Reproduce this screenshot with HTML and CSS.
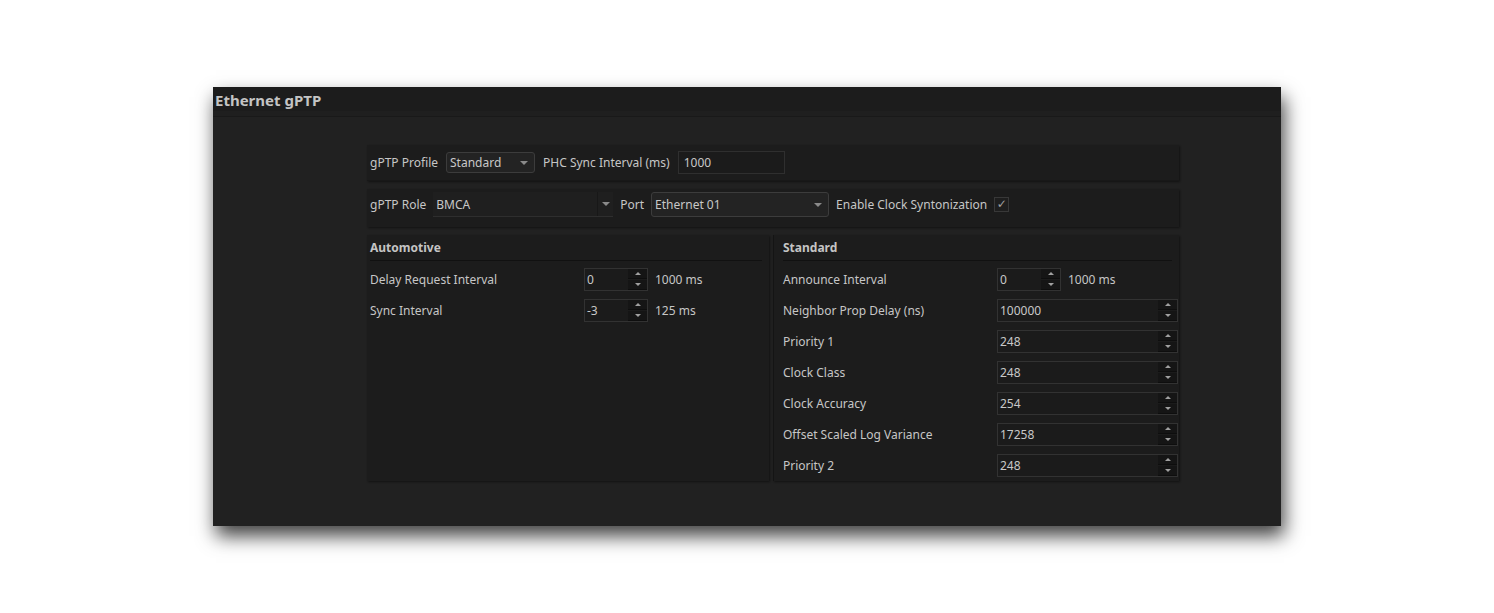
FILE: index.html
```html
<!DOCTYPE html>
<html lang="en">
<head>
  <meta charset="UTF-8">
  <title>Ethernet gPTP</title>
  <link rel="stylesheet" href="styles.css">
</head>
<body>
  <div class="window">
    <div class="titlebar">Ethernet gPTP</div>
    <div class="content">
      <!-- profile row -->
      <div class="frame row-one">
        <span class="lbl">gPTP Profile</span>
        <div class="combo combo-profile"><span>Standard</span><i class="caret"></i></div>
        <span class="lbl">PHC Sync Interval (ms)</span>
        <div class="edit edit-phc">1000</div>
      </div>

      <!-- role row -->
      <div class="frame row-two">
        <span class="lbl">gPTP Role</span>
        <div class="combo combo-flat combo-role"><span>BMCA</span><i class="caret"></i></div>
        <span class="lbl">Port</span>
        <div class="combo combo-port"><span>Ethernet 01</span><i class="caret"></i></div>
        <span class="lbl">Enable Clock Syntonization</span>
        <div class="check">&#10003;</div>
      </div>

      <div class="groups">
        <div class="frame group group-auto">
          <div class="group-title">Automotive</div>
          <div class="field">
            <span class="flabel">Delay Request Interval</span>
            <div class="spin spin-short"><span class="val">0</span><div class="arrows"><b class="up"></b><b class="down"></b></div></div>
            <span class="unit">1000 ms</span>
          </div>
          <div class="field">
            <span class="flabel">Sync Interval</span>
            <div class="spin spin-short"><span class="val">-3</span><div class="arrows"><b class="up"></b><b class="down"></b></div></div>
            <span class="unit">125 ms</span>
          </div>
        </div>

        <div class="frame group group-std">
          <div class="group-title">Standard</div>
          <div class="field">
            <span class="flabel">Announce Interval</span>
            <div class="spin spin-short"><span class="val">0</span><div class="arrows"><b class="up"></b><b class="down"></b></div></div>
            <span class="unit">1000 ms</span>
          </div>
          <div class="field">
            <span class="flabel">Neighbor Prop Delay (ns)</span>
            <div class="spin spin-wide"><span class="val">100000</span><div class="arrows"><b class="up"></b><b class="down"></b></div></div>
          </div>
          <div class="field">
            <span class="flabel">Priority 1</span>
            <div class="spin spin-wide"><span class="val">248</span><div class="arrows"><b class="up"></b><b class="down"></b></div></div>
          </div>
          <div class="field">
            <span class="flabel">Clock Class</span>
            <div class="spin spin-wide"><span class="val">248</span><div class="arrows"><b class="up"></b><b class="down"></b></div></div>
          </div>
          <div class="field">
            <span class="flabel">Clock Accuracy</span>
            <div class="spin spin-wide"><span class="val">254</span><div class="arrows"><b class="up"></b><b class="down"></b></div></div>
          </div>
          <div class="field">
            <span class="flabel">Offset Scaled Log Variance</span>
            <div class="spin spin-wide"><span class="val">17258</span><div class="arrows"><b class="up"></b><b class="down"></b></div></div>
          </div>
          <div class="field">
            <span class="flabel">Priority 2</span>
            <div class="spin spin-wide"><span class="val">248</span><div class="arrows"><b class="up"></b><b class="down"></b></div></div>
          </div>
        </div>
      </div>
    </div>
  </div>
</body>
</html>
```

FILE: styles.css
```css
html {
  background: #ffffff;
}
body {
  margin: 0;
  padding-top: 87px;
  height: 526px;
  font-family: "Noto Sans", "Open Sans", sans-serif;
  font-size: 12px;
  color: #c6c6c6;
}
.window {
  margin-left: 213px;
  width: 1068px;
  height: 439px;
  background: #212121;
  box-shadow: 3px 10px 18px rgba(0, 0, 0, 0.75);
}
.titlebar {
  height: 24px;
  line-height: 26px;
  padding-left: 2px;
  background: #1c1c1c;
  font-weight: bold;
  font-size: 15px;
  color: #c4c4c4;
  border-bottom: 5px solid #1f1f1f;
  box-shadow: 0 1px 0 #191919;
}
.content {
  margin: 29px 0 0 154px;
  width: 812px;
}
.frame {
  background: #1c1c1c;
  box-shadow: 1px 1px 2px rgba(0, 0, 0, 0.45);
}
.row-one,
.row-two {
  display: flex;
  padding-left: 3px;
}
.row-one {
  height: 35px;
  gap: 8px;
  align-items: center;
  border-bottom: 1px solid #181818;
}
.row-two {
  box-sizing: border-box;
  height: 38px;
  gap: 7px;
  margin-top: 8px;
  padding-top: 3px;
  align-items: flex-start;
}
.lbl {
  white-space: nowrap;
}
.row-two .lbl {
  line-height: 26px;
}
.combo {
  position: relative;
  box-sizing: border-box;
  display: flex;
  align-items: center;
  padding-left: 3px;
  background: #232323;
  border: 1px solid #3c3c3c;
  border-radius: 3px;
  color: #c8c8c8;
}
.combo-profile {
  width: 89px;
  height: 21px;
}
.combo-flat {
  border: none;
  border-bottom: 1px solid #2e2e2e;
  border-radius: 0;
  background: #1f1f1f;
}
.combo-role {
  width: 180px;
  height: 25px;
}
.combo-port {
  width: 178px;
  height: 25px;
}
.caret {
  position: absolute;
  right: 6px;
  top: 50%;
  margin-top: -2px;
  border-left: 4px solid transparent;
  border-right: 4px solid transparent;
  border-top: 4px solid #8a8a8a;
}
.combo-role .caret {
  right: 3px;
}
.combo-role::after {
  content: "";
  position: absolute;
  right: 15px;
  top: 0;
  bottom: 0;
  border-left: 1px solid #181818;
}
.edit {
  box-sizing: border-box;
  width: 107px;
  height: 23px;
  line-height: 21px;
  padding-left: 5px;
  background: #1b1b1b;
  border: 1px solid #2f2f2f;
  color: #c8c8c8;
}
.check {
  box-sizing: border-box;
  width: 15px;
  height: 15px;
  margin-top: 5px;
  border: 1px solid #383838;
  background: #1e1e1e;
  color: #a0a0a0;
  font-family: "DejaVu Sans", sans-serif;
  font-size: 12px;
  line-height: 13px;
  text-align: center;
}
.groups {
  display: flex;
  gap: 4px;
  margin-top: 8px;
}
.group {
  height: 246px;
  padding: 1px 3px 0;
  box-sizing: border-box;
}
.group-auto {
  width: 402px;
}
.group-std {
  width: 406px;
  border-left: 1px solid #141414;
  padding-left: 9px;
}
.group-title {
  height: 24px;
  line-height: 24px;
  font-weight: bold;
  color: #c4c4c4;
  border-bottom: 1px solid #111111;
  margin-right: 4px;
  margin-bottom: 7px;
}
.field {
  display: flex;
  align-items: center;
  height: 23px;
  margin-bottom: 8px;
}
.flabel {
  width: 214px;
  flex-shrink: 0;
  white-space: nowrap;
}
.spin {
  box-sizing: border-box;
  display: flex;
  flex-shrink: 0;
  height: 23px;
  background: #1b1b1b;
  border: 1px solid #323232;
  color: #c8c8c8;
}
.spin-short {
  width: 64px;
}
.spin-wide {
  width: 181px;
}
.val {
  flex: 1;
  line-height: 21px;
  padding-left: 2px;
}
.arrows {
  display: flex;
  flex-direction: column;
  width: 19px;
  gap: 1px;
}
.arrows b {
  position: relative;
  flex: 1;
  background: #151515;
  border-bottom: 1px solid #0e0e0e;
}
.arrows b::after {
  content: "";
  position: absolute;
  left: 50%;
  top: 50%;
  margin-left: -3px;
  margin-top: -2px;
  border-left: 3px solid transparent;
  border-right: 3px solid transparent;
}
.arrows .up::after {
  border-bottom: 3px solid #a0a0a0;
}
.arrows .down::after {
  border-top: 3px solid #a0a0a0;
}
.unit {
  margin-left: 7px;
  white-space: nowrap;
}
```
